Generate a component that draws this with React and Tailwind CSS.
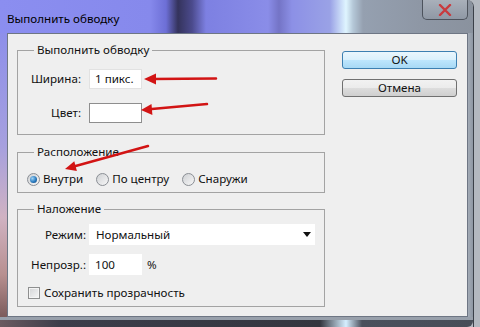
function Radio({ checked }) {
  return (
    <span className="w-[13px] h-[13px] rounded-full border border-[#8a8e94] bg-[linear-gradient(135deg,#cfd1d4,#f7f7f7)] flex items-center justify-center shrink-0">
      {checked && (
        <span className="w-[7px] h-[7px] rounded-full bg-[radial-gradient(circle_at_35%_35%,#9fd3f5,#2a7bc0_55%,#0d3f72)]" />
      )}
    </span>
  );
}

function Group({ title, className, children }) {
  return (
    <fieldset className={"border border-[#a3a3a3] p-0 m-0 min-w-0 " + className}>
      <legend className="ml-[16px] px-[3px] text-[11.6px] leading-[16px]">{title}</legend>
      {children}
    </fieldset>
  );
}

export default function App() {
  return (
    <div className="w-[480px] h-[327px] overflow-hidden relative bg-[#b3b8c0] font-['Noto_Sans',sans-serif] text-[#111]">
      <div className="w-[474px] h-[327px] flex flex-col rounded-tr-[7px] border-r border-[#3b4049] overflow-hidden">
        {/* title bar */}
        <div className="h-[33px] flex items-start justify-between bg-[linear-gradient(90deg,#8b8ef0_0px,#8689ec_150px,#6d6fd6_166px,#34335c_178px,#4b4a8c_192px,#7d80e2_206px,#8a8de8_268px,#7474c6_279px,#8c90e6_292px,#9aa2e6_330px,#dff5ff_346px,#b5c8d8_353px,#95a0b0_363px,#8e97a5_420px,#8a929e_474px)]">
          <div className="pl-[7px] pt-[11px] text-[11.6px] leading-[16px] text-black">Выполнить обводку</div>
          <div className="mr-[5px] w-[46px] h-[20px] rounded-b-[5px] border border-t-0 border-[#4d535d] bg-[linear-gradient(#a9b0ba,#8f98a5)] flex items-center justify-center">
            <svg width="14" height="12" viewBox="0 0 14 12">
              <path d="M2 1 L12 11 M12 1 L2 11" stroke="#c93a3e" strokeWidth="2.4" strokeLinecap="round" />
            </svg>
          </div>
        </div>

        <div className="flex-1 flex">
          <div className="w-[7px] bg-[linear-gradient(#8d8fea,#a6a0de_40%,#d0b2c2_65%,#b89090_85%,#7c5c5c)]" />

          {/* dialog panel */}
          <div className="w-[461px] bg-[#efefef] border border-[#6e7684] flex pl-[9px] pt-[8px]">
            <div className="w-[308px] flex flex-col">
              <Group title="Выполнить обводку" className="h-[93px]">
                <div className="pt-[11px] flex flex-col gap-[14px] text-[11.6px]">
                  <div className="flex items-center">
                    <span className="w-[63px] text-right">Ширина:</span>
                    <div className="ml-[8px] w-[53px] h-[20px] bg-white border border-[#e2e2e2] pl-[5px] leading-[18px]">1 пикс.</div>
                  </div>
                  <div className="flex items-center">
                    <span className="w-[63px] text-right">Цвет:</span>
                    <div className="ml-[8px] w-[53px] h-[20px] bg-white border border-[#8e8e8e]" />
                  </div>
                </div>
              </Group>

              <Group title="Расположение" className="h-[49px] mt-[9px]">
                <div className="pt-[11px] pl-[9px] h-[27px] flex items-center gap-[13px] text-[11.6px]">
                  <label className="flex items-center gap-[3px]">
                    <Radio checked />
                    <span>Внутри</span>
                  </label>
                  <label className="flex items-center gap-[3px]">
                    <Radio />
                    <span>По центру</span>
                  </label>
                  <label className="flex items-center gap-[3px]">
                    <Radio />
                    <span>Снаружи</span>
                  </label>
                </div>
              </Group>

              <Group title="Наложение" className="h-[106px] mt-[8px]">
                <div className="pt-[7px] flex flex-col text-[11.6px]">
                  <div className="flex items-center">
                    <span className="w-[68px] text-right">Режим:</span>
                    <div className="ml-[3px] w-[226px] h-[21px] bg-white pl-[7px] pr-[4px] flex items-center justify-between">
                      <span>Нормальный</span>
                      <svg width="8" height="5" viewBox="0 0 8 5">
                        <path d="M0 0 H8 L4 5 Z" fill="#111" />
                      </svg>
                    </div>
                  </div>
                  <div className="flex items-center mt-[9px]">
                    <span className="w-[68px] text-right">Непрозр.:</span>
                    <div className="ml-[3px] w-[53px] h-[21px] bg-white pl-[6px] leading-[21px]">100</div>
                    <span className="ml-[5px]">%</span>
                  </div>
                  <div className="flex items-center mt-[10px] h-[16px] pl-[10px]">
                    <span className="w-[12px] h-[12px] border border-[#8e8f8f] bg-[linear-gradient(135deg,#d3d4d6,#f6f6f6)] shadow-[inset_0_0_0_1px_#f4f4f4]" />
                    <span className="ml-[4px]">Сохранить прозрачность</span>
                  </div>
                </div>
              </Group>
            </div>

            <div className="ml-[17px] w-[115px] flex flex-col pt-[9px] gap-[10px] text-[11.6px]">
              <button className="h-[18px] rounded-[3px] border border-[#3c7fb1] bg-[linear-gradient(#eaf6fd,#d9f0fc_50%,#bee6fd_50%,#a7d9f5)] leading-[16px] text-center">
                OK
              </button>
              <button className="h-[18px] rounded-[3px] border border-[#707070] bg-[linear-gradient(#f2f2f2,#ebebeb_50%,#dddddd_50%,#cfcfcf)] leading-[16px] text-center">
                Отмена
              </button>
            </div>
          </div>

          <div className="w-[5px] bg-[linear-gradient(90deg,#a3abb6,#8e97a4)]" />
        </div>

        <div className="h-[10px] border-t-[3px] border-[#98a0ab] rounded-br-[6px] bg-[linear-gradient(90deg,#6a5a60_0px,#3c3d4a_60px,#34363f_320px,#d6efff_346px,#4a505c_362px,#474d58_474px)]" />
      </div>

      {/* red annotation arrows */}
      <svg className="absolute inset-0 pointer-events-none" width="480" height="327" viewBox="0 0 480 327">
        <g stroke="#d21414" strokeWidth="2.5" strokeLinecap="round">
          <line x1="216" y1="78.5" x2="152" y2="79" />
          <line x1="207" y1="104" x2="149" y2="109.3" />
          <line x1="148" y1="146" x2="72" y2="167" />
        </g>
        <g fill="#d21414">
          <polygon points="144,79 156,73.5 156,84.5" />
          <polygon points="141,110 152.4,115 151.5,104" />
          <polygon points="65,169 76.9,170.9 74.3,161.2" />
        </g>
      </svg>
    </div>
  );
}
